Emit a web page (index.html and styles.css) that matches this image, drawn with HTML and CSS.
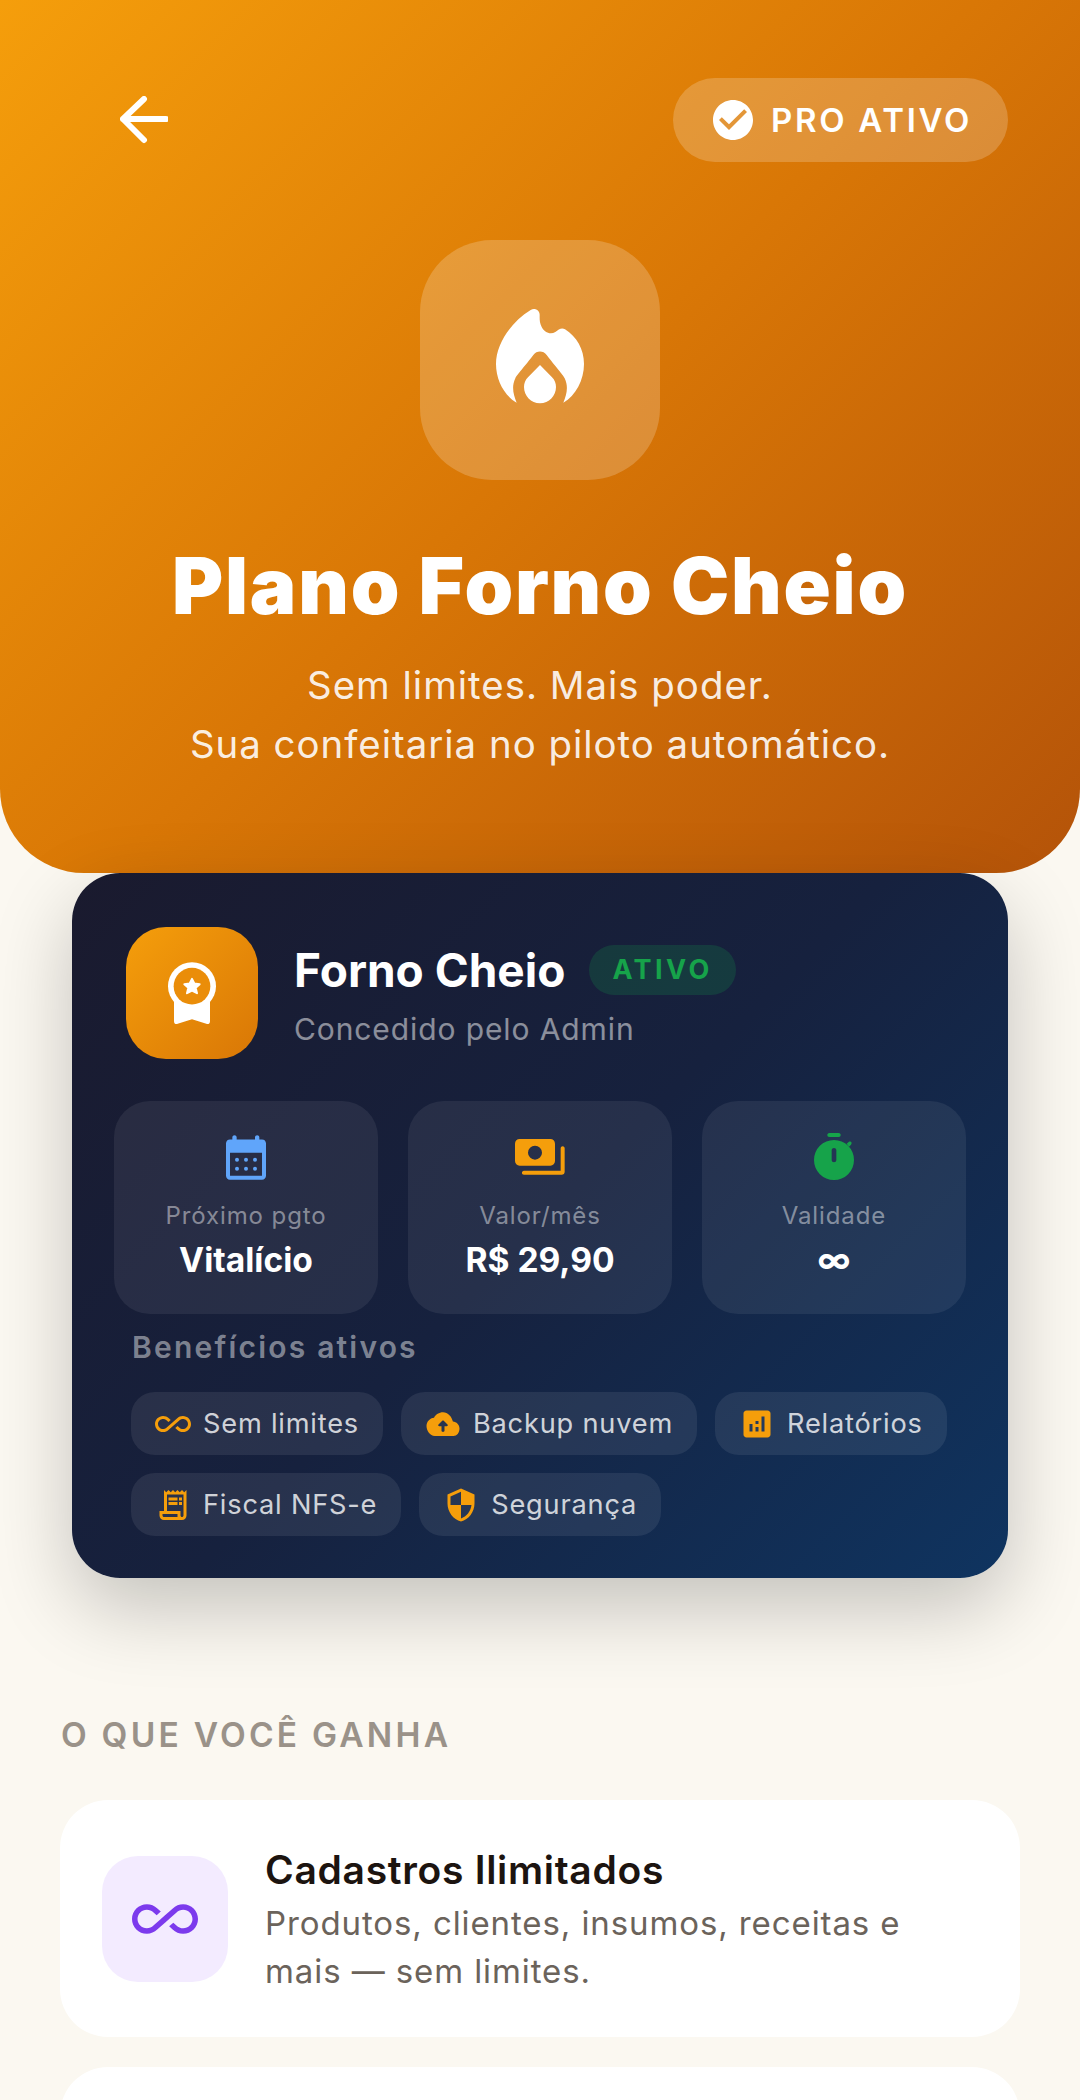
FILE: index.html
```html
<!DOCTYPE html>
<html lang="pt-BR">
<head>
<meta charset="utf-8">
<title>Plano Forno Cheio</title>
<link rel="stylesheet" href="styles.css">
</head>
<body>
<header class="hero">
  <div class="hero-top">
    <button class="back" aria-label="Voltar">
      <svg class="back-icon" viewBox="0 0 48 48"><path d="M3 23H46M24 3 3 23 24 44"/></svg>
    </button>
    <div class="pro-pill">
      <svg class="pro-check" viewBox="2 2 20 20"><path d="M12 2C6.48 2 2 6.48 2 12s4.48 10 10 10 10-4.48 10-10S17.52 2 12 2zm-2 15l-5-5 1.41-1.41L10 14.17l7.59-7.59L19 8l-9 9z"/></svg>
      <span>PRO ATIVO</span>
    </div>
  </div>
  <div class="hero-icon">
    <svg class="flame" viewBox="288 237 264 285"><path fill-rule="evenodd" d="M392 240C404 233 418 240 419 254C419 266 418 277 425 291C432 305 450 316 466 306C476 299 484 292 495 298C530 320 552 358 552 402C552 450 527 497 490 518C500 494 506 470 494 445C488 433 478 424 440 375C430 361 410 361 400 375C362 424 352 433 346 445C334 470 340 494 350 518C313 497 288 450 288 402C288 340 335 275 392 240ZM420 405 456 442C464 450 468 460 468 471C468 498 447 520 420 520C393 520 372 498 372 471C372 460 376 450 384 442Z"/></svg>
  </div>
  <h1 class="hero-title">Plano Forno Cheio</h1>
  <p class="hero-sub">Sem limites. Mais poder.<br>Sua confeitaria no piloto automático.</p>
</header>

<section class="plan-card">
  <div class="plan-head">
    <div class="medal-box">
      <svg class="medal" viewBox="324 279 144 188"><path d="M342 396V456C342 463 347 466 353 464L396 450 439 464C445 466 450 463 450 456V396Z"/><circle cx="396" cy="351" r="72" class="medal-ring"/><circle cx="396" cy="351" r="55" class="medal-in"/><path class="medal-star" d="M396 329 403 343 419 345 407 356 411 372 396 364 381 372 385 356 373 345 389 343Z"/></svg>
    </div>
    <div class="plan-info">
      <div class="plan-name-row"><span class="plan-name">Forno Cheio</span><span class="active-tag">ATIVO</span></div>
      <div class="plan-sub">Concedido pelo Admin</div>
    </div>
  </div>

  <div class="stats">
    <div class="stat">
      <svg class="stat-icon cal" viewBox="498 797 120 134"><path fill-rule="evenodd" d="M517 810V803C517 795 530 795 530 803V810H585V803C585 795 598 795 598 803V810H606C613 810 618 815 618 822V919C618 926 613 931 606 931H510C503 931 498 926 498 919V822C498 815 503 810 510 810ZM510 850V919H606V850Z"/><circle cx="531" cy="871" r="6"/><circle cx="558" cy="871" r="6"/><circle cx="585" cy="871" r="6"/><circle cx="531" cy="898" r="6"/><circle cx="558" cy="898" r="6"/><circle cx="585" cy="898" r="6"/></svg>
      <div class="stat-label">Próximo pgto</div>
      <div class="stat-value">Vitalício</div>
    </div>
    <div class="stat">
      <svg class="stat-icon money" viewBox="45 810 150 108"><path fill-rule="evenodd" d="M59 810H151C159 810 165 816 165 824V876C165 884 159 890 151 890H59C51 890 45 884 45 876V824C45 816 51 810 59 810ZM105 830A21 21 0 1 0 105 872 21 21 0 1 0 105 830Z"/><path d="M182 838C182 830 194 830 194 838V908C194 914 190 917 185 917H72C64 917 64 905 72 905H182Z"/></svg>
      <div class="stat-label">Valor/mês</div>
      <div class="stat-value">R$ 29,90</div>
    </div>
    <div class="stat">
      <svg class="stat-icon timer" viewBox="942 790 120 141"><path d="M988 790H1016C1024 790 1024 802 1016 802H988C980 802 980 790 988 790Z"/><path d="M1040 822 1046 817C1052 813 1058 820 1053 825L1047 831Z"/><path fill-rule="evenodd" d="M1002 811A60 60 0 1 0 1002 931 60 60 0 1 0 1002 811ZM995 842C995 833 1009 833 1009 842V871C1009 880 995 880 995 871Z"/></svg>
      <div class="stat-label">Validade</div>
      <div class="stat-value">∞</div>
    </div>
  </div>

  <div class="benefits">
    <div class="benefits-title">Benefícios ativos</div>
    <div class="chips">
      <div class="chip"><svg class="chip-icon" viewBox="0 0 24 24"><path d="M18.6 6.62c-1.44 0-2.8.56-3.77 1.53L12 10.66 10.48 12h.01L7.8 14.39c-.64.64-1.49.99-2.4.99-1.87 0-3.39-1.51-3.39-3.38S3.53 8.62 5.4 8.62c.91 0 1.76.35 2.44 1.03l1.13 1 1.51-1.34L9.22 8.2C8.2 7.18 6.84 6.62 5.4 6.62 2.42 6.62 0 9.04 0 12s2.42 5.38 5.4 5.38c1.44 0 2.8-.56 3.77-1.53l2.83-2.5.01.01L13.52 12h-.01l2.69-2.39c.64-.64 1.49-.99 2.4-.99 1.87 0 3.39 1.51 3.39 3.38s-1.52 3.38-3.39 3.38c-.9 0-1.76-.35-2.44-1.03l-1.14-1.01-1.51 1.34 1.27 1.12c1.02 1.01 2.37 1.57 3.82 1.57 2.98 0 5.4-2.41 5.4-5.38s-2.42-5.37-5.4-5.37z"/></svg>Sem limites</div>
      <div class="chip"><svg class="chip-icon" viewBox="0 0 24 24"><path fill-rule="evenodd" d="M18.6 10.4C18 7.2 15.3 4.1 12 4.1 9.4 4.1 7.1 5.6 6 7.8 3.2 8.1 1 10.4 1 13.3 1 16.3 3.4 20 6.5 20H19C21.200 20 23 18 23 15 23 12.600 21 10.600 18.600 10.400ZM13 13.500V16.500C13 17.500 11 17.500 11 16.500V13.500H9.500C8.800 13.500 8.600 12.800 9 12.400L11.500 9.900C11.800 9.600 12.200 9.600 12.500 9.900L15 12.400C15.400 12.800 15.200 13.500 14.500 13.500Z"/></svg>Backup nuvem</div>
      <div class="chip"><svg class="chip-icon" viewBox="0 0 24 24"><path d="M19 3H5c-1.1 0-2 .9-2 2v14c0 1.1.9 2 2 2h14c1.1 0 2-.9 2-2V5c0-1.1-.9-2-2-2zM9 17H7v-5h2v5zm4 0h-2v-3h2v3zm0-5h-2v-2h2v2zm4 5h-2V7h2v10z"/></svg>Relatórios</div>
      <div class="chip"><svg class="chip-icon" viewBox="0 0 24 24"><path d="M19.5 3.5 18 2l-1.5 1.5L15 2l-1.5 1.5L12 2l-1.5 1.5L9 2 7.5 3.5 6 2v14H3v3c0 1.66 1.34 3 3 3h12c1.66 0 3-1.34 3-3V2l-1.5 1.5zM15 20H6c-.55 0-1-.45-1-1v-1h10v2zm4-1c0 .55-.45 1-1 1s-1-.45-1-1v-3H8V5h11v14z"/><path d="M9 7h6v2H9zm7 0h2v2h-2zM9 10h6v2H9zm7 0h2v2h-2z"/></svg>Fiscal NFS-e</div>
      <div class="chip"><svg class="chip-icon" viewBox="0 0 24 24"><path d="M12 1L3 5v6c0 5.55 3.84 10.74 9 12 5.16-1.26 9-6.45 9-12V5l-9-4zm0 10.99h7c-.53 4.12-3.28 7.79-7 8.94V12H5V6.3l7-3.11v8.8z"/></svg>Segurança</div>
    </div>
  </div>
</section>

<main class="gains">
  <h2 class="gains-title">O QUE VOCÊ GANHA</h2>
  <article class="feature">
    <div class="feature-icon"><svg class="feature-svg" viewBox="0 0 24 24"><path d="M18.6 6.62c-1.44 0-2.8.56-3.77 1.53L12 10.66 10.48 12h.01L7.8 14.39c-.64.64-1.49.99-2.4.99-1.87 0-3.39-1.51-3.39-3.38S3.53 8.62 5.4 8.62c.91 0 1.76.35 2.44 1.03l1.13 1 1.51-1.34L9.22 8.2C8.2 7.18 6.84 6.62 5.4 6.62 2.42 6.62 0 9.04 0 12s2.42 5.38 5.4 5.38c1.44 0 2.8-.56 3.77-1.53l2.83-2.5.01.01L13.52 12h-.01l2.69-2.39c.64-.64 1.49-.99 2.4-.99 1.87 0 3.39 1.51 3.39 3.38s-1.52 3.38-3.39 3.38c-.9 0-1.76-.35-2.44-1.03l-1.14-1.01-1.51 1.34 1.27 1.12c1.02 1.01 2.37 1.57 3.82 1.57 2.98 0 5.4-2.41 5.4-5.38s-2.42-5.37-5.4-5.37z"/></svg></div>
    <div class="feature-text">
      <h3 class="feature-title">Cadastros Ilimitados</h3>
      <p class="feature-desc">Produtos, clientes, insumos, receitas e mais — sem limites.</p>
    </div>
  </article>
  <article class="feature feature-next"></article>
</main>
</body>
</html>
```
FILE: styles.css
```css
* { box-sizing: border-box; }
html, body { margin: 0; padding: 0; height: 2100px; overflow: hidden; }
body { background: #fbf8f1; font-family: Inter, "Liberation Sans", sans-serif; color: #1c1410; }

.hero {
  height: 873px;
  padding: 78px 72px 0;
  background: linear-gradient(135deg, #f59e0b 0%, #d97706 50%, #b45309 100%);
  border-radius: 0 0 84px 84px;
  color: #fff;
  text-align: center;
}
.hero-top { display: flex; justify-content: space-between; align-items: center; height: 84px; }
.back { background: none; border: 0; padding: 0 0 0 48px; display: flex; }
.back-icon { width: 48px; height: 48px; fill: none; stroke: #fff; stroke-width: 6; stroke-linecap: round; stroke-linejoin: round; }
.pro-pill {
  display: flex; align-items: center; gap: 18px;
  height: 84px; padding: 0 36px 0 40px;
  border-radius: 42px;
  background: rgba(255, 255, 255, .2);
  font-size: 33px; font-weight: 600; letter-spacing: 2.7px;
}
.pro-check { width: 40px; height: 40px; fill: #fff; }
.hero-icon {
  width: 240px; height: 240px; margin: 78px auto 0;
  border-radius: 72px;
  background: rgba(255, 255, 255, .2);
  display: flex; align-items: center; justify-content: center;
}
.flame { width: 88px; height: 95px; fill: #fff; margin-bottom: 8px; }
.hero-title {
  margin: 56px 0 0;
  font-size: 78px; line-height: 100px; font-weight: 900; letter-spacing: 1.8px;
  white-space: nowrap;
}
.hero-sub {
  margin: 20px 0 0;
  font-size: 38.4px; line-height: 59px; font-weight: 400; letter-spacing: 1px;
  color: rgba(255, 255, 255, .9);
}

.plan-card {
  width: 936px; height: 705px; margin: 0 auto;
  padding: 54px 42px 0;
  border-radius: 48px;
  background: linear-gradient(135deg, #1a1a2e 0%, #16213e 50%, #0f3460 100%);
  box-shadow: 0 30px 80px rgba(0, 0, 0, .22);
  color: #fff;
  position: relative;
}
.plan-head { display: flex; align-items: center; gap: 36px; padding: 0 12px; }
.medal-box {
  width: 132px; height: 132px; border-radius: 40px;
  background: linear-gradient(135deg, #f59e0b, #d97706);
  display: flex; align-items: center; justify-content: center;
  flex: none;
}
.medal { width: 48px; height: 63px; fill: #fff; }
.medal-ring { fill: #fff; }
.medal-in { fill: #ea8d09; }
.medal-star { stroke: #fff; stroke-width: 6; stroke-linejoin: round; }
.plan-info { padding-top: 5px; }
.plan-name-row { display: flex; align-items: center; gap: 24px; }
.plan-name { font-size: 46px; font-weight: 700; line-height: 56px; }
.active-tag {
  height: 50px; padding: 0 23px; border-radius: 25px;
  background: rgba(22, 163, 74, .2); color: #16a34a;
  font-size: 27px; font-weight: 700; letter-spacing: 3.4px;
  display: flex; align-items: center;
}
.plan-sub { margin-top: 10px; font-size: 30px; line-height: 42px; letter-spacing: .9px; color: rgba(255, 255, 255, .5); }

.stats { display: grid; grid-template-columns: repeat(3, 264px); gap: 30px; margin-top: 42px; }
.stat {
  height: 213px; border-radius: 36px;
  background: rgba(255, 255, 255, .07);
  display: flex; flex-direction: column; align-items: center;
  padding-top: 34px;
}
.stat-icon { height: 47px; width: 50px; display: block; }
.cal { width: 40px; height: 45px; fill: #60a5fa; }
.money { width: 50px; height: 36px; margin-top: 4px; margin-bottom: 5px; fill: #f59e0b; }
.timer { width: 40px; height: 47px; margin-top: -2px; fill: #16a34a; }
.stat-label { margin-top: 19px; font-size: 24px; line-height: 34px; letter-spacing: .9px; color: rgba(255, 255, 255, .45); }
.stat-value { margin-top: 5px; font-size: 33.6px; line-height: 44px; font-weight: 700; }

.benefits { padding: 0 0 0 17px; }
.benefits-title { margin: 12px 0 0 1px; font-size: 30px; line-height: 42px; font-weight: 600; letter-spacing: 2.2px; color: rgba(255, 255, 255, .45); }
.chips { display: flex; flex-wrap: wrap; gap: 18px; margin-top: 24px; width: 824px; }
.chip {
  height: 63px; padding: 0 24px; border-radius: 24px;
  background: rgba(255, 255, 255, .08);
  display: flex; align-items: center; gap: 12px;
  font-size: 27.2px; letter-spacing: .8px; color: rgba(255, 255, 255, .8);
}
.chip-icon { width: 36px; height: 36px; fill: #f59e0b; flex: none; }

.gains { padding: 0 60px; }
.gains-title { margin: 135px 0 0 1px; font-size: 33.5px; line-height: 44px; font-weight: 600; letter-spacing: 3.2px; color: #9a9289; }
.feature {
  margin-top: 43px;
  background: #fff; border-radius: 48px;
  height: 237px; padding: 0 42px;
  display: flex; align-items: center; gap: 37px;
}
.feature-next { margin-top: 30px; }
.feature-icon {
  width: 126px; height: 126px; border-radius: 36px;
  background: #f3ebff;
  display: flex; align-items: center; justify-content: center;
  flex: none;
}
.feature-svg { width: 66px; height: 66px; fill: #7c3aed; }
.feature-text { padding-top: 4px; }
.feature-title { margin: 0; font-size: 39px; line-height: 48px; font-weight: 600; color: #1c1410; letter-spacing: .7px; }
.feature-desc { margin: 5px 0 0; font-size: 33px; line-height: 48px; letter-spacing: .9px; color: #6b635b; }
```
